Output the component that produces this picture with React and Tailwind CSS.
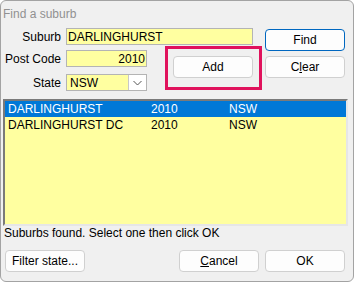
import React from 'react';

const btn =
  'w-[80px] h-[22px] flex items-center justify-center rounded-[4px] border border-[#d0d0d0] bg-[#fdfdfd] text-[12px] text-black';

const rows = [
  { name: 'DARLINGHURST', code: '2010', state: 'NSW', selected: true },
  { name: 'DARLINGHURST DC', code: '2010', state: 'NSW', selected: false },
];

export default function App() {
  return (
    <div className="w-[356px] h-[282px] bg-white font-['Liberation_Sans',Arial,sans-serif] text-[12px] leading-[14px]">
      <div className="w-[354px] h-[282px] border border-[#a3a3a3] rounded-[6px] bg-[#f0f0f0] flex flex-col">
        {/* Title */}
        <div className="h-[27px] pl-[2px] pt-[6px] text-[#919191] text-[12px]">Find a suburb</div>

        {/* Search fields */}
        <div className="flex">
          <div className="flex flex-col">
            <div className="flex items-center gap-[5px]">
              <span className="w-[60px] text-right">Suburb</span>
              <div className="w-[187px] h-[17px] border border-[#b4b4b4] bg-[#ffffa0] pl-[1px] flex items-center">
                DARLINGHURST
              </div>
            </div>
            <div className="flex mt-[1px]">
              <div className="flex flex-col pt-[4px]">
                <div className="flex items-center gap-[5px]">
                  <span className="w-[60px] text-right">Post Code</span>
                  <div className="w-[81px] h-[17px] border border-[#b4b4b4] bg-[#ffffa0] pr-[1px] flex items-center justify-end">
                    2010
                  </div>
                </div>
                <div className="flex items-center gap-[5px] mt-[7px]">
                  <span className="w-[60px] text-right">State</span>
                  <div className="w-[81px] h-[17px] border border-[#b4b4b4] bg-[#ffffa0] flex items-center">
                    <span className="flex-1 pl-[3px]">NSW</span>
                    <div className="w-[18px] h-[15px] bg-white border-l border-[#c8c8c8] flex items-center justify-center">
                      <svg width="9" height="6" viewBox="0 0 9 6">
                        <path d="M0.5 1 L4.5 5 L8.5 1" fill="none" stroke="#555" strokeWidth="1" />
                      </svg>
                    </div>
                  </div>
                </div>
              </div>
              <div className="ml-[18px] w-[97px] h-[44px] border-[3px] border-[#e0125c] pl-[5px] pt-[7px]">
                <button className={btn}>Add</button>
              </div>
            </div>
          </div>
          <div className="ml-[3px] pt-[1px] flex flex-col gap-[5px]">
            <button className={btn + ' !border-[#0067c0]'}>Find</button>
            <button className={btn}>
              <span>
                C<u>l</u>ear
              </span>
            </button>
          </div>
        </div>

        {/* Results list */}
        <div className="ml-[2px] mt-[8px] w-[345px] h-[127px] border-2 border-t-[#7a7a7a] border-l-[#7a7a7a] border-r-[#e6e6e6] border-b-[#e6e6e6] bg-[#ffffa0]">
          {rows.map((r) => (
            <div
              key={r.name}
              className={`h-[16px] flex items-center pl-[3px] ${r.selected ? 'bg-[#0078d7] text-white' : 'text-black'}`}
            >
              <span className="w-[143px]">{r.name}</span>
              <span className="w-[78px]">{r.code}</span>
              <span>{r.state}</span>
            </div>
          ))}
        </div>

        <div className="pl-[3px]">Suburbs found. Select one then click OK</div>

        {/* Buttons */}
        <div className="flex pl-[4px] pr-[8px] mt-[10px]">
          <button className={btn}>Filter state...</button>
          <div className="ml-auto flex gap-[6px]">
            <button className={btn}>
              <span>
                <u>C</u>ancel
              </span>
            </button>
            <button className={btn}>OK</button>
          </div>
        </div>
      </div>
    </div>
  );
}
